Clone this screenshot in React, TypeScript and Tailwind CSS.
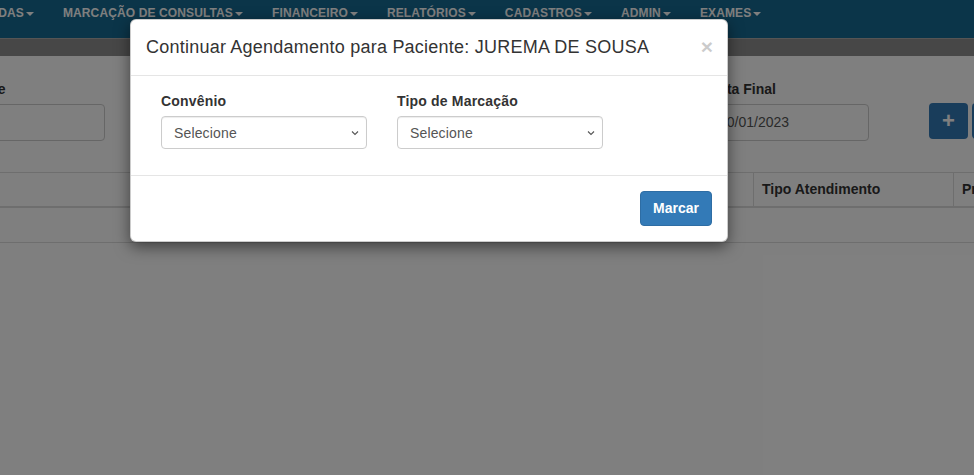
import React from "react";

const navItems = [
  "AGENDADAS",
  "MARCAÇÃO DE CONSULTAS",
  "FINANCEIRO",
  "RELATÓRIOS",
  "CADASTROS",
  "ADMIN",
  "EXAMES",
];

function Caret() {
  return (
    <span className="ml-[2px] inline-block h-0 w-0 border-x-[4px] border-t-[4px] border-x-transparent border-t-white align-middle" />
  );
}

function SelectBox() {
  return (
    <div className="relative mt-[5px] h-[33px] rounded-[4px] border border-[#ccc] bg-white shadow-[inset_0_1px_1px_rgba(0,0,0,0.075)]">
      <span className="absolute left-[12px] top-[7px] text-[14px] leading-[18px] tracking-[0.15px] text-[#555]">
        Selecione
      </span>
      <svg
        className="absolute right-[7px] top-[13px]"
        width="8"
        height="6"
        viewBox="0 0 8 6"
        fill="none"
      >
        <path d="M1 1.5 L4 4.5 L7 1.5" stroke="#555" strokeWidth="1.1" />
      </svg>
    </div>
  );
}

export default function App() {
  return (
    <div
      className="relative h-[475px] w-[974px] overflow-hidden bg-white text-[#333]"
      style={{ fontFamily: '"Liberation Sans", Arial, sans-serif' }}
    >
      {/* page behind the modal */}
      <nav className="flex h-[38px] bg-[#166a92]">
        <ul className="-ml-[69px] flex shrink-0">
          {navItems.map((item) => (
            <li
              key={item}
              className="shrink-0 px-[14.5px] pt-[6px] text-[12px] font-bold leading-[14px] tracking-[0.12px] text-white"
            >
              {item}
              <Caret />
            </li>
          ))}
        </ul>
      </nav>
      <div className="h-[18px] border-t border-[#aaa] bg-[#8f8f8f]" />

      <div className="flex items-start pt-[23px]">
        <div className="-ml-[52px] w-[157px] shrink-0">
          <label className="block text-[14px] font-bold leading-[20px]">Paciente</label>
          <div className="mt-[5px] h-[37px] rounded-[4px] border border-[#ccc] bg-white" />
        </div>
        <div className="ml-[601px] w-[163px] shrink-0">
          <label className="block pl-[3px] text-[14px] font-bold leading-[20px]">Data Final</label>
          <div className="mt-[5px] flex h-[37px] items-center rounded-[4px] border border-[#ccc] bg-white pl-[12px] text-[14px] text-[#555]">
            10/01/2023
          </div>
        </div>
        <div className="ml-[60px] mt-[24px] flex shrink-0 gap-[4px]">
          <button className="flex h-[36px] w-[39px] items-center justify-center rounded-[4px] bg-[#337ab7] text-[22px] font-bold leading-none text-white">
            +
          </button>
          <button className="h-[36px] w-[39px] rounded-[4px] bg-[#337ab7]" />
        </div>
      </div>

      <div className="mt-[31px] flex h-[36px] border-y border-b-2 border-[#ddd]">
        <div className="w-[754px] shrink-0 border-r border-[#ddd]" />
        <div className="flex w-[200px] shrink-0 items-center border-r border-[#ddd] pl-[8px] text-[14px] font-bold">
          Tipo Atendimento
        </div>
        <div className="flex shrink-0 items-center pl-[8px] text-[14px] font-bold">Preço</div>
      </div>
      <div className="h-[35px] border-b border-[#ddd]" />

      {/* backdrop */}
      <div className="absolute inset-0 bg-black/50" />

      {/* modal */}
      <div className="absolute left-[130px] top-[19px] w-[598px] rounded-[6px] border border-black/20 bg-white shadow-[0_5px_15px_rgba(0,0,0,0.5)]">
        <div className="flex items-center justify-between border-b border-[#e5e5e5] px-[15px] py-[15px]">
          <h4 className="text-[18px] leading-[25px] tracking-[0.23px] text-[#333]">
            Continuar Agendamento para Paciente: JUREMA DE SOUSA
          </h4>
          <span className="-mt-[2px] -mr-[1px] text-[21px] font-bold leading-none text-black opacity-20">
            ×
          </span>
        </div>
        <div className="flex px-[15px] pb-[26px] pt-[15px]">
          <div className="w-[236px] px-[15px]">
            <label className="block text-[14px] font-bold leading-[20px] tracking-[0.18px]">
              Convênio
            </label>
            <SelectBox />
          </div>
          <div className="w-[236px] px-[15px]">
            <label className="block text-[14px] font-bold leading-[20px] tracking-[0.18px]">
              Tipo de Marcação
            </label>
            <SelectBox />
          </div>
        </div>
        <div className="flex justify-end border-t border-[#e5e5e5] p-[15px]">
          <button className="h-[35px] rounded-[4px] border border-[#2e6da4] bg-[#337ab7] px-[12px] text-[14px] font-bold text-white">
            Marcar
          </button>
        </div>
      </div>
    </div>
  );
}
